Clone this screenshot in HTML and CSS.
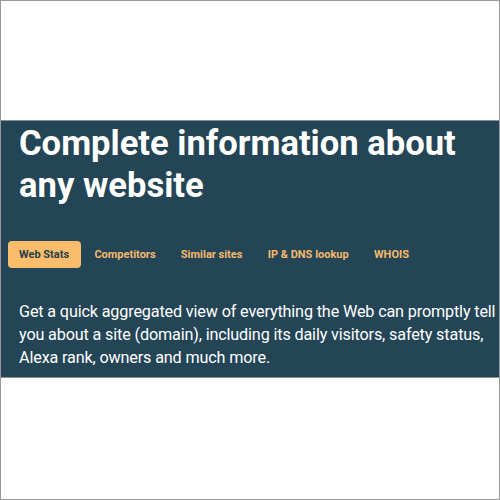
FILE: index.html
```html
<!DOCTYPE html>
<html>
<head>
<meta charset="utf-8">
<link rel="stylesheet" href="styles.css">
</head>
<body>
<div class="page">
  <section class="hero">
    <h1 class="title">Complete information about any website</h1>
    <nav class="tabs">
      <span class="tab active">Web Stats</span>
      <span class="tab">Competitors</span>
      <span class="tab">Similar sites</span>
      <span class="tab">IP &amp; DNS lookup</span>
      <span class="tab">WHOIS</span>
    </nav>
    <p class="lead">Get a quick aggregated view of everything the Web can promptly tell you about a site (domain), including its daily visitors, safety status, Alexa rank, owners and much more.</p>
  </section>
</div>
</body>
</html>
```
FILE: styles.css
```css
html, body {
  margin: 0;
  padding: 0;
  background: #fff;
}
.page {
  box-sizing: border-box;
  width: 500px;
  height: 500px;
  border: 1px solid #999;
  padding-top: 119px;
  font-family: Roboto, "Liberation Sans", sans-serif;
  overflow: hidden;
}
.hero {
  background: #234556;
  border-top: 1px solid #8a8f93;
  border-bottom: 1px solid #8a8f93;
  padding: 1px 0 8px 18px;
  overflow: hidden;
}
.title {
  margin: 0;
  color: #fff;
  font-size: 34.6px;
  line-height: 42px;
  font-weight: 700;
  width: 470px;
}
.tabs {
  display: flex;
  gap: 2.3px;
  margin-top: 35px;
  margin-left: -11px;
}
.tab {
  height: 27px;
  line-height: 27px;
  padding: 0 12px 0 11px;
  font-size: 11px;
  font-weight: 700;
  color: #f7b96a;
  border-radius: 4px;
}
.tab.active {
  background: #fbbd6b;
  color: #24414f;
}
.lead {
  margin: 32px 0 0;
  color: #fff;
  font-size: 16.2px;
  line-height: 23px;
  width: 478px;
  letter-spacing: -0.15px;
}
```
